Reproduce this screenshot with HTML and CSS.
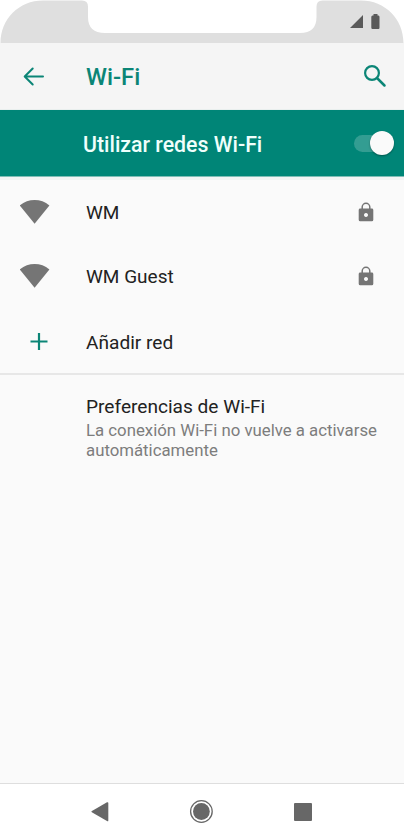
FILE: index.html
```html
<!DOCTYPE html>
<html lang="es">
<head>
<meta charset="utf-8">
<title>Wi-Fi</title>
<link rel="stylesheet" href="styles.css">
</head>
<body>
<div class="phone">
  <div class="status">
    <svg width="404" height="43" viewBox="0 0 404 43">
      <path fill="#dfdfdf" d="M.5 43C.5 19 19 .4 43 .4H82Q88 .4 88 6.500V17Q88 33 105 33H300Q316.500 33 316.500 17V6.500Q316.500.4 322.500.4H361C385 .4 403.500 19 403.500 43Z"/>
      <path fill="#5a5a5a" d="M350 28 363 15V28ZM371.300 17Q371.300 15.500 372.500 15.500H373.500V14H377.500V15.500H378.500Q379.500 15.500 379.500 17V27.500Q379.500 29 378.500 29H372.500Q371.300 29 371.300 27.500Z"/>
    </svg>
  </div>
  <header class="appbar">
    <svg class="back" width="22" height="20" viewBox="0 0 22 20" fill="none" stroke="#0b8576" stroke-width="2" stroke-linecap="round" stroke-linejoin="round"><path d="M20 10.500H2M9.700 2.500 1.700 10.500 9.700 18.500"/></svg>
    <h1 class="title">Wi-Fi</h1>
    <svg class="search" width="24" height="24" viewBox="0 0 24 24" fill="none" stroke="#0b8576"><circle cx="9" cy="9" r="6.900" stroke-width="2.200"/><path d="M14 14 21.500 21.500" stroke-width="2.500" stroke-linecap="round"/></svg>
  </header>
  <section class="banner">
    <span class="banner-label">Utilizar redes Wi-Fi</span>
    <span class="switch"><span class="thumb"></span></span>
  </section>
  <ul class="networks">
    <li class="row">
      <svg class="wifi" width="30" height="25" viewBox="0 0 30 25" fill="#757575"><path d="M-.2 5.500Q6.300.1 14.600.1T29.400 5.500L14.600 23.800Z"/></svg>
      <span class="name">WM</span>
      <svg class="lock" width="16" height="20" viewBox="0 0 16 20"><path d="M4.200 7V5.100a3.800 3.800 0 0 1 7.600 0V7" fill="none" stroke="#757575" stroke-width="1.500"/><path fill="#757575" fill-rule="evenodd" d="M2.200 6.600H13.800Q15.300 6.600 15.300 8V17.800Q15.300 19.300 13.800 19.300H2.200Q.7 19.300.7 17.800V8Q.7 6.600 2.200 6.600ZM8 11a2 2 0 1 0 .01 0Z"/></svg>
    </li>
    <li class="row">
      <svg class="wifi" width="30" height="25" viewBox="0 0 30 25" fill="#757575"><path d="M-.2 5.500Q6.300.1 14.600.1T29.400 5.500L14.600 23.800Z"/></svg>
      <span class="name">WM Guest</span>
      <svg class="lock" width="16" height="20" viewBox="0 0 16 20"><path d="M4.200 7V5.100a3.800 3.800 0 0 1 7.600 0V7" fill="none" stroke="#757575" stroke-width="1.500"/><path fill="#757575" fill-rule="evenodd" d="M2.200 6.600H13.800Q15.300 6.600 15.300 8V17.800Q15.300 19.300 13.800 19.300H2.200Q.7 19.300.7 17.800V8Q.7 6.600 2.200 6.600ZM8 11a2 2 0 1 0 .01 0Z"/></svg>
    </li>
    <li class="row add">
      <svg class="plus" width="18" height="18" viewBox="0 0 18 18" stroke="#0b8576" stroke-width="2.200"><path d="M.5 8.500H17.500M9 0V17"/></svg>
      <span class="name">Añadir red</span>
    </li>
  </ul>
  <section class="prefs">
    <h2 class="prefs-title">Preferencias de Wi-Fi</h2>
    <p class="prefs-text">La conexión Wi-Fi no vuelve a activarse<br>automáticamente</p>
  </section>
  <nav class="nav">
    <svg width="18" height="20" viewBox="0 0 18 20" fill="#676767"><path d="M.5 9.300 16 .3Q17.300-.2 17.300 1V18.400Q17.300 19.800 16 19.100L.8 10.200Q.2 9.700.5 9.300Z"/></svg>
    <svg width="24" height="24" viewBox="0 0 24 24"><circle cx="12.400" cy="11.500" r="10.800" fill="none" stroke="#676767" stroke-width="1.300"/><circle cx="12.400" cy="11.500" r="8.400" fill="#676767"/></svg>
    <svg width="18" height="19" viewBox="0 0 18 19"><rect width="18" height="18" rx="1" fill="#676767"/></svg>
  </nav>
</div>
</body>
</html>
```
FILE: styles.css
```css
* { box-sizing: border-box; margin: 0; padding: 0; }
body { background: #fff; font-family: Roboto, sans-serif; color: #222; }
svg { display: block; flex: none; }
.phone { width: 404px; height: 840px; display: flex; flex-direction: column; overflow: hidden; background: #fafafa; }
.status { height: 43px; background: #fff; }
.appbar { height: 67px; display: flex; align-items: center; background: #f5f5f5; border-bottom: 1px solid #e9efee; padding-right: 17px; }
.back { margin-left: 23px; }
.title { margin-left: 41px; padding-top: 2px; font-size: 23.800px; font-weight: 500; color: #0b8576; }
.search { margin-left: auto; }
.banner { height: 67px; display: flex; align-items: center; background: #008577; border-bottom: 1px solid #80bdb6; padding: 0 10px 0 83px; }
.banner-label { padding-top: 2px; font-size: 21.300px; font-weight: 500; color: #effffc; }
.switch { width: 40px; height: 17px; margin-left: auto; border-radius: 9px; background: #339d92; display: flex; align-items: center; justify-content: flex-end; }
.thumb { width: 24px; height: 24px; border-radius: 50%; background: #fafafa; box-shadow: 0 1px 2px rgba(0, 0, 0, .35); }
.networks { list-style: none; height: 198px; border-top: 3px solid #f2f3f3; border-bottom: 2px solid #e7e7e7; }
.row { height: 64px; display: flex; align-items: center; padding-right: 30px; }
.add { height: 67px; }
.wifi { margin: 0 36px 0 20px; }
.plus { margin: 0 38px 0 30px; }
.name { font-size: 19px; }
.add .name { padding-top: 1px; font-size: 19.100px; }
.lock { margin-left: auto; }
.prefs { flex: 1; padding: 20px 0 0 86px; }
.prefs-title { font-size: 19.100px; line-height: 24px; font-weight: 400; }
.prefs-text { padding-top: 2px; font-size: 16.800px; line-height: 19.500px; color: #7d7d7d; white-space: nowrap; }
.nav { height: 57px; display: flex; align-items: center; background: #fff; border-top: 1px solid #dedede; padding-left: 91px; }
.nav svg:nth-child(2) { margin: 0 81px 0 80px; }
```
